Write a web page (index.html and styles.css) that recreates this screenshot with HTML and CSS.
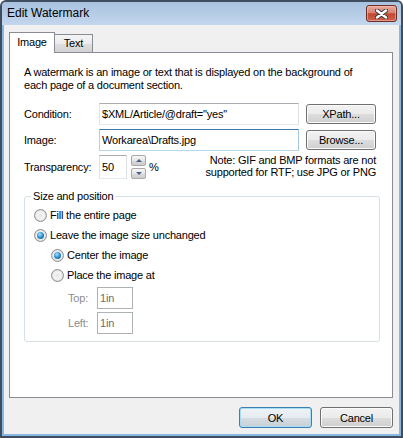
FILE: index.html
```html
<!DOCTYPE html>
<html lang="en">
<head>
    <meta charset="UTF-8">
    <title>Edit Watermark</title>
    <link rel="stylesheet" href="styles.css">
</head>
<body>
    <div class="window">
        <!-- Title bar -->
        <div class="titlebar">
            <span class="title">Edit Watermark</span>
            <div class="close-btn">
                <svg width="13" height="10" viewBox="0 0 13 10">
                    <path d="M2 1.5 L11 8.5 M11 1.5 L2 8.5" stroke="#3a3a3a" stroke-width="4.4" stroke-linecap="round" fill="none"/>
                    <path d="M2 1.5 L11 8.5 M11 1.5 L2 8.5" stroke="#ffffff" stroke-width="2.4" stroke-linecap="round" fill="none"/>
                </svg>
            </div>
        </div>

        <div class="client">
            <!-- Tabs -->
            <div class="tabs">
                <div class="tab active">Image</div>
                <div class="tab">Text</div>
            </div>

            <div class="panel">
                <p class="intro">A watermark is an image or text that is displayed on the background of<br>each page of a document section.</p>

                <div class="form">
                    <div class="row">
                        <span class="label">Condition:</span>
                        <input class="field" type="text" value='$XML/Article/@draft="yes"'>
                        <button class="btn side">XPath...</button>
                    </div>
                    <div class="row">
                        <span class="label">Image:</span>
                        <input class="field focus" type="text" value="Workarea\Drafts.jpg">
                        <button class="btn side">Browse...</button>
                    </div>
                    <div class="row tall">
                        <span class="label">Transparency:</span>
                        <input class="field small" type="text" value="50">
                        <div class="spinner">
                            <div class="spin up"><span class="arrow-up"></span></div>
                            <div class="spin down"><span class="arrow-down"></span></div>
                        </div>
                        <span class="percent">%</span>
                        <p class="note">Note: GIF and BMP formats are not<br>supported for RTF; use JPG or PNG</p>
                    </div>
                </div>

                <!-- Size and position group -->
                <div class="group">
                    <div class="legend">Size and position</div>
                    <div class="options">
                        <div class="option"><span class="radio"></span>Fill the entire page</div>
                        <div class="option"><span class="radio checked"></span>Leave the image size unchanged</div>
                        <div class="option sub"><span class="radio checked"></span>Center the image</div>
                        <div class="option sub"><span class="radio"></span>Place the image at</div>
                    </div>
                    <div class="pos-row first">
                        <span class="pos-label">Top:</span>
                        <input class="field pos" type="text" value="1in" disabled>
                    </div>
                    <div class="pos-row">
                        <span class="pos-label">Left:</span>
                        <input class="field pos" type="text" value="1in" disabled>
                    </div>
                </div>
            </div>

            <!-- Dialog buttons -->
            <div class="footer">
                <button class="btn main default">OK</button>
                <button class="btn main">Cancel</button>
            </div>
        </div>
    </div>
</body>
</html>
```

FILE: styles.css
```css
* {
    box-sizing: border-box;
}

body {
    margin: 0;
    font-family: "Liberation Sans", Arial, sans-serif;
    font-size: 11px;
    letter-spacing: -0.2px;
    color: #000;
}

/* Window frame */
.window {
    width: 403px;
    height: 438px;
    border: 2px solid #3f4d5e;
    border-radius: 6px 6px 0 0;
    background: #86b8e3;
    padding: 0 2px 2px;
    display: flex;
    flex-direction: column;
}

.titlebar {
    height: 23px;
    margin: 0 -2px;
    display: flex;
    align-items: flex-start;
    background: linear-gradient(#a9c2df, #c3d7ed);
    border-radius: 4px 4px 0 0;
}

.title {
    font-size: 12px;
    letter-spacing: 0;
    line-height: 23px;
    padding-left: 5px;
}

.close-btn {
    margin: 3px 4px 0 auto;
    width: 31px;
    height: 17px;
    border: 1px solid #6a2f27;
    border-radius: 3px;
    background: linear-gradient(#e7aa9e 0%, #d98071 45%, #c4472f 52%, #cc6250 100%);
    box-shadow: inset 0 0 0 1px rgba(255, 200, 190, 0.5);
    display: flex;
    align-items: center;
    justify-content: center;
}

.client {
    height: 409px;
    background: #f0f0f0;
    padding: 7px 6px 6px 5px;
    display: flex;
    flex-direction: column;
}

/* Tabs */
.tabs {
    display: flex;
    align-items: flex-end;
    height: 20px;
}

.tab {
    height: 18px;
    width: 39px;
    margin-left: -1px;
    border: 1px solid #898c95;
    border-bottom: none;
    text-align: center;
    line-height: 17px;
    background: linear-gradient(#f4f4f4 0%, #ececec 50%, #dedede 55%, #d2d2d2 100%);
}

.tab.active {
    width: 46px;
    height: 21px;
    margin-left: 0;
    margin-bottom: -1px;
    line-height: 19px;
    background: #fff;
    position: relative;
    z-index: 1;
}

.panel {
    height: 346px;
    border: 1px solid #898c95;
    background: #fff;
    padding: 13px 0 0 14px;
}

.intro {
    margin: 0;
    line-height: 13px;
    white-space: nowrap;
}

/* Form rows */
.form {
    margin-top: 11px;
    width: 352px;
    display: flex;
    flex-direction: column;
    gap: 4px;
}

.row {
    display: flex;
    align-items: center;
    height: 22px;
}

.row.tall {
    height: 24px;
}

.label {
    width: 75px;
    flex: none;
}

.field {
    width: 200px;
    height: 22px;
    margin: 0;
    padding: 0 2px;
    border: 1px solid;
    border-color: #abadb3 #dbdfe6 #e3e9ef #e2e3ea;
    background: #fff;
    font: inherit;
    letter-spacing: inherit;
    color: #000;
    outline: none;
}

.field.focus {
    border-color: #3d7bad #a4c9e3 #b7d9ed #b5cfe7;
}

.field.small {
    width: 28px;
    height: 24px;
}

.spinner {
    margin-left: 4px;
    display: flex;
    flex-direction: column;
    gap: 2px;
}

.spin {
    width: 15px;
    height: 11px;
    border: 1px solid #a9a9a9;
    border-radius: 2px;
    background: linear-gradient(#f7f7f7, #e6e6e6 50%, #d9d9d9 51%, #cfcfcf);
    display: flex;
    align-items: center;
    justify-content: center;
}

.arrow-up {
    border-left: 3px solid transparent;
    border-right: 3px solid transparent;
    border-bottom: 3px solid #4a6088;
}

.arrow-down {
    border-left: 3px solid transparent;
    border-right: 3px solid transparent;
    border-top: 3px solid #4a6088;
}

.percent {
    margin-left: 3px;
}

.note {
    margin: -1px 0 0 auto;
    align-self: flex-start;
    text-align: right;
    line-height: 12px;
    white-space: nowrap;
}

/* Buttons */
.btn {
    margin: 0;
    padding: 0;
    font: inherit;
    letter-spacing: inherit;
    color: #000;
    border: 1px solid #707070;
    border-radius: 3px;
    background: linear-gradient(#f2f2f2 0%, #ebebeb 50%, #dddddd 51%, #cfcfcf 100%);
    box-shadow: inset 0 0 0 1px #fbfbfb;
}

.btn.side {
    margin-left: 7px;
    width: 70px;
    height: 20px;
}

.btn.main {
    width: 73px;
    height: 21px;
}

.btn.default {
    border-color: #3c7fb1;
    box-shadow: inset 0 0 0 1px #a7dcf6;
    background: linear-gradient(#eef3f6 0%, #e5ebef 50%, #d6dde2 51%, #c9d1d6 100%);
}

/* Size and position group */
.group {
    margin-top: 17px;
    width: 356px;
    height: 146px;
    border: 1px solid #d5dfe5;
    border-radius: 3px;
    padding-left: 9px;
}

.legend {
    display: table;
    margin: -7px 0 0 -3px;
    padding: 0 2px;
    background: #fff;
    line-height: 13px;
}

.options {
    margin-top: 2px;
}

.option {
    display: flex;
    align-items: center;
    gap: 3px;
    height: 20px;
}

.option.sub {
    padding-left: 17px;
}

.radio {
    width: 13px;
    height: 13px;
    flex: none;
    border-radius: 50%;
    border: 1px solid #8e8f8f;
    background: radial-gradient(circle, #e4e4e4 0%, #f5f5f5 45%, #d8d8d8 75%, #c6c6c6 100%);
    display: flex;
    align-items: center;
    justify-content: center;
}

.radio.checked::after {
    content: "";
    width: 7px;
    height: 7px;
    border-radius: 50%;
    background: radial-gradient(circle at 40% 35%, #a8e2fb 0%, #2c90d0 50%, #0d4a7c 100%);
}

.pos-row {
    display: flex;
    align-items: center;
    padding-left: 34px;
    margin-top: 3px;
}

.pos-row.first {
    margin-top: 2px;
}

.pos-label {
    width: 29px;
    color: #8d8d8d;
}

.field.pos {
    width: 36px;
    border-color: #adb2b5;
    color: #6d6d6d;
}

.footer {
    margin-top: 9px;
    display: flex;
    justify-content: flex-end;
    gap: 8px;
}
```
